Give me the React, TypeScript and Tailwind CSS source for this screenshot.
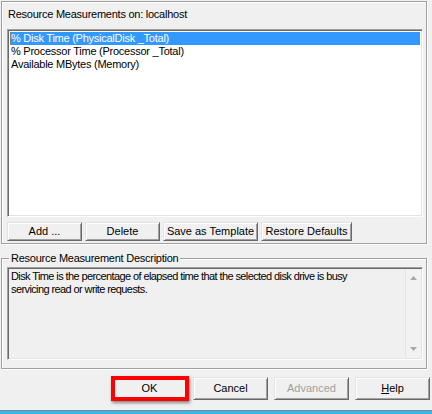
import React from "react";

const font = { fontFamily: '"Liberation Sans", Arial, sans-serif' };

// classic raised button
function Btn({ w, children, disabled }: { w: string; children: React.ReactNode; disabled?: boolean }) {
  return (
    <div
      className={`${w} h-full flex items-center justify-center border border-t-[#e3e3e3] border-l-[#e3e3e3] border-r-[#696969] border-b-[#696969] bg-[#f0f0f0] shadow-[inset_1px_1px_0_#ffffff,inset_-1px_-1px_0_#a0a0a0] text-[11px] leading-[13px] ${
        disabled ? "text-[#a0a0a0]" : "text-black"
      }`}
    >
      {children}
    </div>
  );
}

export default function App() {
  const items = [
    "% Disk Time (PhysicalDisk _Total)",
    "% Processor Time (Processor _Total)",
    "Available MBytes (Memory)",
  ];

  return (
    <div className="w-[432px] h-[414px] bg-[#f0f0f0] overflow-hidden flex flex-col text-black" style={font}>
      {/* Resource measurements group */}
      <div className="mt-[1px] ml-[1px] w-[426px] h-[243px] border border-[#a0a0a0] shadow-[inset_1px_1px_0_#ffffff,1px_1px_0_#ffffff] pl-[5px] pt-[6px] flex flex-col">
        <div className="text-[11px] leading-[13px] ml-[1px] tracking-[-0.25px]">Resource Measurements on: localhost</div>

        {/* list box */}
        <div className="mt-[8px] w-[416px] h-[188px] bg-white border border-t-[#a0a0a0] border-l-[#a0a0a0] border-r-white border-b-white shadow-[inset_1px_1px_0_#696969,inset_-1px_-1px_0_#e3e3e3] p-[2px]">
          {items.map((t, i) => (
            <div
              key={t}
              className={`h-[13px] pl-[1px] text-[11px] leading-[12px] tracking-[-0.25px] whitespace-nowrap ${
                i === 0 ? "bg-[#3399ff] text-white outline outline-1 outline-dotted outline-[#c8702c] -outline-offset-1" : ""
              }`}
            >
              {t}
            </div>
          ))}
        </div>

        <div className="mt-[5px] h-[19px] flex gap-[3px]">
          <Btn w="w-[75px]">Add ...</Btn>
          <Btn w="w-[75px]">Delete</Btn>
          <Btn w="w-[95px]">Save as Template</Btn>
          <Btn w="w-[91px]">Restore Defaults</Btn>
        </div>
      </div>

      {/* description group */}
      <div className="relative mt-[14px] ml-[1px] w-[426px] h-[111px] border border-[#a0a0a0] shadow-[inset_1px_1px_0_#ffffff,1px_1px_0_#ffffff] pl-[5px] pt-[8px]">
        <span className="absolute left-[7px] -top-[7px] px-[2px] bg-[#f0f0f0] text-[11px] leading-[13px] tracking-[-0.25px]">
          Resource Measurement Description
        </span>

        <div className="w-[416px] h-[93px] flex border border-t-[#a0a0a0] border-l-[#a0a0a0] border-r-white border-b-white shadow-[inset_1px_1px_0_#696969,inset_-1px_-1px_0_#e3e3e3] p-[2px] pr-[1px]">
          <div className="flex-1 pl-[1px] text-[11px] leading-[13px] tracking-[-0.6px]">
            Disk Time is the percentage of elapsed time that the selected disk drive is busy
            <br />
            servicing read or write requests.
          </div>
          {/* disabled scrollbar */}
          <div className="w-[16px] h-full flex flex-col justify-between items-center border-l border-[#e3e3e3] bg-[#f2f2f2] py-[6px]">
            <svg width="7" height="4" viewBox="0 0 7 4">
              <path d="M0 4 L3.5 0 L7 4 Z" fill="#a8a8a8" />
            </svg>
            <svg width="7" height="4" viewBox="0 0 7 4">
              <path d="M0 0 L7 0 L3.5 4 Z" fill="#a8a8a8" />
            </svg>
          </div>
        </div>
      </div>

      {/* dialog buttons */}
      <div className="mt-[8px] ml-[112px] h-[23px] flex gap-[6px]">
        <div className="relative h-full">
          <Btn w="w-[75px]">OK</Btn>
          <div className="absolute -left-[1px] -top-[1px] w-[78px] h-[25px] border-[4px] border-[#ff0000] shadow-[1px_2px_3px_rgba(0,0,0,0.45)]" />
        </div>
        <Btn w="w-[75px]">Cancel</Btn>
        <Btn w="w-[75px]" disabled>
          Advanced
        </Btn>
        <Btn w="w-[75px]">
          <span>
            <span className="underline">H</span>elp
          </span>
        </Btn>
      </div>

      <div className="mt-auto h-[1px] bg-[#7a8a94]" />
      <div className="h-[3px] bg-[#3cb4e6]" />
    </div>
  );
}
